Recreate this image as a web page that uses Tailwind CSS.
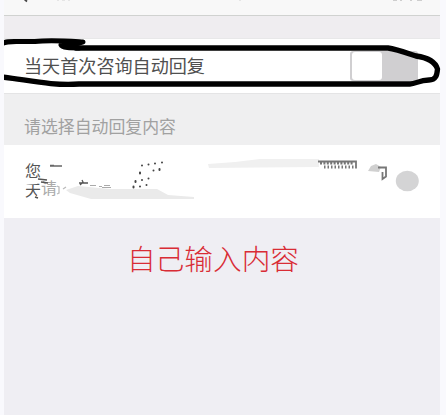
<!DOCTYPE html>
<html lang="zh-CN">
<head>
<meta charset="utf-8">
<title>自动回复</title>
<script src="https://cdn.jsdelivr.net/npm/@tailwindcss/browser@4"></script>
</head>
<body class="relative h-[415px] w-[446px] overflow-hidden bg-[#f9f9fd] pl-1 pr-[6px] font-['Noto_Sans_CJK_SC',sans-serif]">
<main class="flex h-full flex-col bg-[#efeef3]">
  <header class="h-4 shrink-0 border-b border-[#d0d2d0] bg-[#f8f8f8]">
    <svg class="block h-[15px] w-full" viewBox="4 0 436 15" fill="none">
      <path d="M23 -2L27 1.5" stroke="#444" stroke-width="1.8"/>
      <path d="M57 .2h2m3 0h3m3 0h2M239 .2h2" stroke="#ddd"/>
      <path d="M393 .2h4m3 0h2m8 0h2m5 0h5" stroke="#bbb"/>
    </svg>
  </header>
  <div class="h-[23px] shrink-0 border-b border-[#e8e8e9] bg-[#efedf0]"></div>
  <section class="flex h-[54px] shrink-0 items-center justify-between bg-white pl-5 pr-[22px]">
    <span class="mb-0.5 whitespace-nowrap text-[18.1px] leading-[52px] text-[#505050]">当天首次咨询自动回复</span>
    <span class="mb-px flex h-[30px] w-[68px] rounded-[3px] bg-[#d0cfd1] p-px pl-0.5"><i class="h-[28px] w-[30px] rounded-[3px] bg-white"></i></span>
  </section>
  <h2 class="flex h-[52px] shrink-0 items-center border-t border-[#e4e4e5] bg-[#efeff0] pl-5 pt-3.5 text-[16.9px] font-normal leading-none text-[#a1a1a1]">请选择自动回复内容</h2>
  <section class="relative h-[73px] shrink-0 bg-white pl-[21px] pt-[16px] text-[16px] leading-[19px] text-[#555]">
    <p>您</p>
    <p class="flex"><span>天</span><span class="-mt-0.5 text-[#aaa]">请</span></p>
  </section>
  <section class="flex grow justify-center">
    <p class="mt-5 h-10 -translate-x-[9px] whitespace-nowrap text-[28.7px] font-light leading-10 text-[#d92c35]">自己输入内容</p>
  </section>
</main>
<svg class="pointer-events-none absolute inset-0" width="446" height="415" viewBox="0 0 446 415" fill="none">
  <!-- brushed-over message text -->
  <path d="M24 181l14-1-1 4-13 1zM38 193l3-2v8h-5z" fill="#fff"/>
  <path d="M50 165.500h4M50 166h12" stroke="#666" stroke-width="1.400"/>
  <path d="M38 179l9 1M41 182l7 1M35 197l3 1" stroke="#555" stroke-width="1.700"/>
  <path d="M57 186l2 1v6l-2 1m6-5l3-2" stroke="#bbb" stroke-width="1.300"/>
  <path d="M79 183h9M82 180l1 2-3 3" stroke="#555" stroke-width="1.300"/>
  <path d="M90 185.500h6m3 1h3m2-1h6m-8 2h9" stroke="#aaa" stroke-width="1"/>
  <path d="M66 190L78 186L110 189L157 189L168 195L194 197V199H91L70 193Z" fill="#eaeaea"/>
  <path d="M142 165.500h0M148.500 164.500h0M155 163.500h0M162 162.500h0M140 172.500v1M153.500 170.500h0M159.500 169v1M135.500 181v1M142 180h0M148.500 178.500h0M133.500 186.500v1M140 186.500h0M146.500 185h0" stroke="#444" stroke-width="2" stroke-linecap="round"/>
  <path d="M208 164L235 162L260 159H319V167L260 167.500L209 168Z" fill="#f0f0f0"/>
  <path d="M318 161.500h38v7" stroke="#777" stroke-width="1.800"/>
  <path d="M320 163h34" stroke="#777" stroke-width="3" stroke-dasharray="2 1.400"/>
  <path d="M324 167h31" stroke="#777" stroke-width="3" stroke-dasharray="1.500 2"/>
  <path d="M368 171L371 166L376 164L381 167L379 172Z" fill="#d0d0d0"/>
  <path d="M378 167.500h8v9l-3.500 2.500v-7" stroke="#777" stroke-width="1.800"/>
  <ellipse cx="407.300" cy="181" rx="11.500" ry="10.300" fill="#d4d4d5"/>
  <!-- hand-drawn highlight loop -->
  <clipPath id="screen"><path d="M4 0h440v415H4z"/></clipPath>
  <g clip-path="url(#screen)" stroke="#000" stroke-linecap="round" stroke-linejoin="round">
    <path stroke-width="5" d="M2 44C6 40 14 42 35 41.500C50 39.500 68 41 83 42C76 45 65 43 61 45C62 48 71 48 79 48"/>
    <path stroke-width="5.300" d="M76 48H388C396 49 407 53 416 56C427 57.500 435 61 437.500 69C437 75 436 80 429 80C419 80 416 84 410 84H79C52 86 28 80 2 77"/>
  </g>
</svg>
</body>
</html>
